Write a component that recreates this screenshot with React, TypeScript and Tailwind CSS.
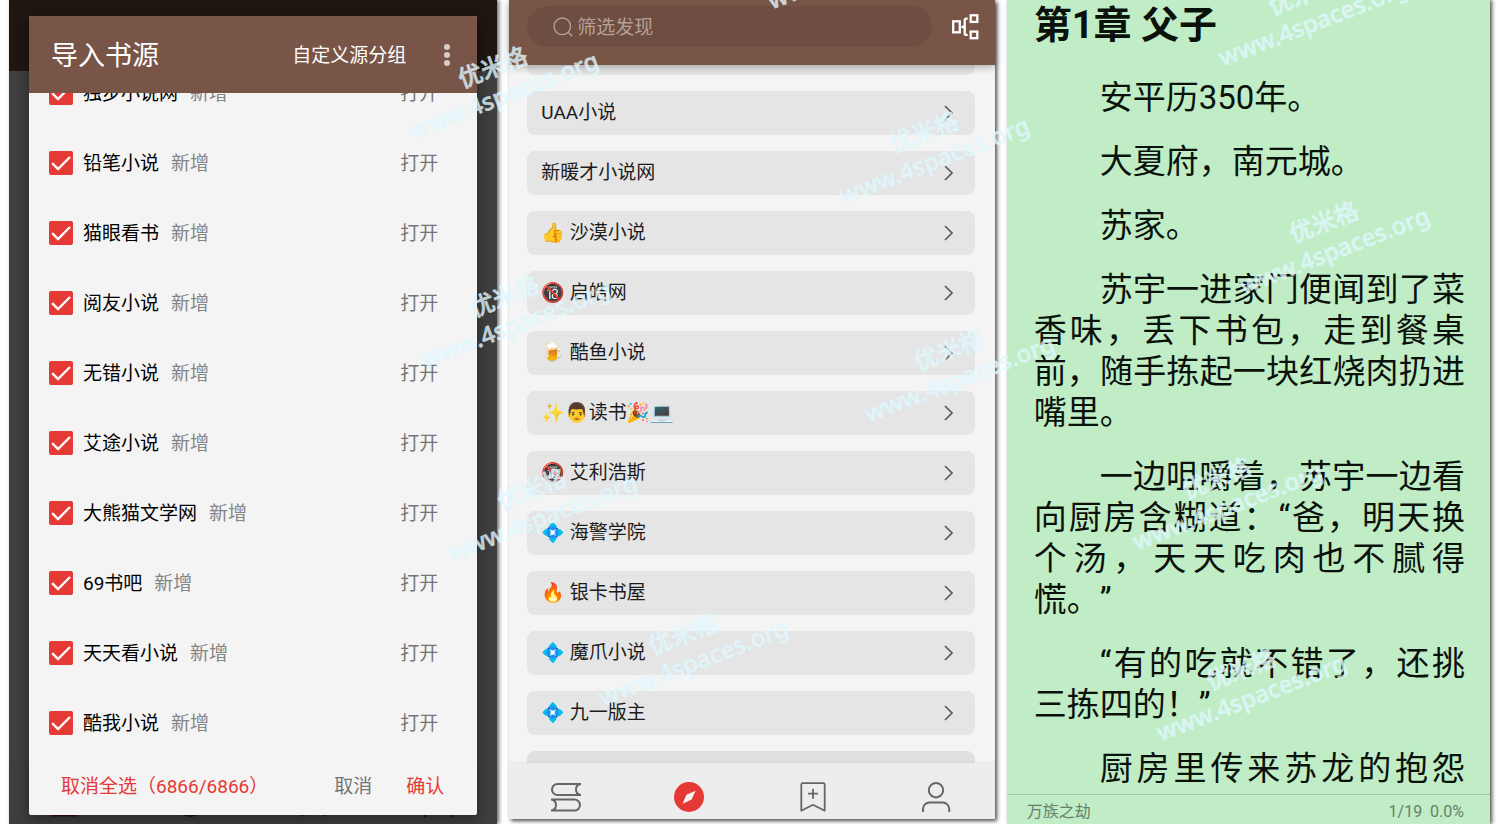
import React, { useState } from 'react';

const importSources = [
  '独步小说网',
  '铅笔小说',
  '猫眼看书',
  '阅友小说',
  '无错小说',
  '艾途小说',
  '大熊猫文学网',
  '69书吧',
  '天天看小说',
  '酷我小说',
];

const discoverSources = [
  'UAA小说',
  '新暖才小说网',
  '👍 沙漠小说',
  '🔞 启皓网',
  '🍺 酷鱼小说',
  '✨👨读书🎉💻',
  '🔞 艾利浩斯',
  '💠 海警学院',
  '🔥 银卡书屋',
  '💠 魔爪小说',
  '💠 九一版主',
];

const paragraphs = [
  '安平历350年。',
  '大夏府，南元城。',
  '苏家。',
  '苏宇一进家门便闻到了菜香味，丢下书包，走到餐桌前，随手拣起一块红烧肉扔进嘴里。',
  '一边咀嚼着，苏宇一边看向厨房含糊道：“爸，明天换个汤，天天吃肉也不腻得慌。”',
  '“有的吃就不错了，还挑三拣四的！”',
];

// Centre points of the repeated site mark
const marks = [
  [498, 81],
  [857, -49],
  [929, 146],
  [1308, 8],
  [1329, 236],
  [510, 310],
  [954, 364],
  [537, 503],
  [1222, 492],
  [688, 648],
  [1246, 683],
];

function BooksIcon() {
  return (
    <svg viewBox="0 0 30 30" className="size-[30px]" fill="none" stroke="currentColor" strokeWidth="2" strokeLinejoin="round">
      <path d="M30 2H6.5a5.5 5.5 0 0 0 0 11H30C26.5 12.5 25 10 25 7.5S26.5 2.5 30 2" />
      <path d="M0 17.6h23.5a5.5 5.5 0 0 1 0 11H0c3.5-.5 5-3 5-5.5s-1.500-5-5-5.500" />
    </svg>
  );
}

function CompassIcon() {
  return (
    <svg viewBox="0 0 30 30" className="size-[30px]">
      <circle cx="15" cy="15" r="15" fill="currentColor" />
      <path d="M21.600 8.700 17.600 17.500 8.600 21.700 12.400 12.800Z" fill="#f4f4f4" />
    </svg>
  );
}

function BookmarkIcon() {
  return (
    <svg viewBox="0 0 30 30" className="size-[30px]" fill="none" stroke="currentColor" strokeWidth="1.800" strokeLinejoin="round">
      <path d="M4.800 1.200h20.400a1.500 1.500 0 0 1 1.500 1.500v26L15 22.800 3.300 28.700v-26a1.500 1.500 0 0 1 1.500-1.500Z" />
      <path d="M15 6.700v10M10 11.700h10" />
    </svg>
  );
}

function PersonIcon() {
  return (
    <svg viewBox="0 0 30 30" className="size-[30px]" fill="none" stroke="currentColor" strokeWidth="2">
      <circle cx="15" cy="8.200" r="7.200" />
      <path d="M2 30v-3a6.600 6.600 0 0 1 6.600-6.600h13A6.600 6.600 0 0 1 28.200 27v3" />
    </svg>
  );
}

function BottomNav({ active }: { active: 'books' | 'discover' }) {
  return (
    <nav className="flex h-14 shrink-0 justify-between bg-[#ededed] pl-[42px] pr-11 pt-[19px] text-[#666] shadow-[0_-1px_2px_rgba(0,0,0,0.06)]">
      <button aria-label="书架" className={active === 'books' ? 'h-[30px] text-[#e53935]' : 'h-[30px]'}>
        <BooksIcon />
      </button>
      <button aria-label="发现" className={active === 'discover' ? 'h-[30px] text-[#e53935]' : 'h-[30px]'}>
        <CompassIcon />
      </button>
      <button aria-label="订阅" className="h-[30px]">
        <BookmarkIcon />
      </button>
      <button aria-label="我的" className="h-[30px]">
        <PersonIcon />
      </button>
    </nav>
  );
}

function SourceRow({ name }: { name: string }) {
  const [checked, setChecked] = useState(true);

  return (
    <li className="flex h-[70px] shrink-0 items-center pl-5 pr-[39px]">
      <label className="flex items-center">
        <span className="relative mr-[10px] size-6">
          <input
            type="checkbox"
            checked={checked}
            onChange={() => setChecked(!checked)}
            className="peer block size-6 appearance-none rounded-[2px] border-2 border-[#e53935] checked:bg-[#e53935]"
          />
          <svg viewBox="0 0 24 24" className="pointer-events-none absolute inset-0 hidden size-6 peer-checked:block" fill="none" stroke="#fff" strokeWidth="2.400">
            <path d="M3.200 12.200 9 18 21 6" />
          </svg>
        </span>
        <span className="pt-[2px] text-black">{name}</span>
        <span className="ml-3 pt-[2px] text-[#858585]">新增</span>
      </label>
      <button className="ml-auto pt-[2px] text-[#757575]">打开</button>
    </li>
  );
}

function ImportScreen() {
  return (
    <section className="relative flex min-w-0 flex-col bg-[#f4f4f4] shadow-[2px_0_4px_rgba(0,0,0,0.6)]">
      <div className="h-[71px] bg-[#795548]" />
      <div className="flex-1" />
      <BottomNav active="books" />
      <div className="absolute inset-0 bg-black/74" />

      <div role="dialog" aria-label="导入书源" className="absolute bottom-[9px] left-5 right-5 top-4 flex flex-col overflow-hidden rounded-[2px] bg-[#f4f4f4] text-[19px] shadow-[0_4px_14px_rgba(0,0,0,0.4)]">
        <header className="flex h-[77px] shrink-0 items-center bg-[#795548] pl-[22px] pr-[27px] text-white">
          <h1 className="pt-1 text-[27px]">导入书源</h1>
          <button className="ml-auto pt-1">自定义源分组</button>
          <button aria-label="更多" className="ml-[38px] flex flex-col gap-[2px]">
            <span className="size-[6px] rounded-full bg-[#d7ccc8]" />
            <span className="size-[6px] rounded-full bg-[#d7ccc8]" />
            <span className="size-[6px] rounded-full bg-[#d7ccc8]" />
          </button>
        </header>
        <ul className="flex min-h-0 flex-1 flex-col justify-end overflow-hidden">
          {importSources.map((name) => (
            <SourceRow key={name} name={name} />
          ))}
        </ul>
        <footer className="flex h-[57px] shrink-0 items-center pl-8 pr-[33px] pt-[2px] text-[#e53935]">
          <button>取消全选（6866/6866）</button>
          <button className="ml-auto text-[#757575]">取消</button>
          <button className="ml-[34px]">确认</button>
        </footer>
      </div>
    </section>
  );
}

function DiscoverScreen() {
  return (
    <section className="mb-[5px] flex min-w-0 flex-col bg-[#f4f4f4] text-[19px] shadow-[2px_2px_4px_rgba(0,0,0,0.7)]">
      <header className="z-10 flex h-[65px] shrink-0 items-start bg-[#795548] pl-[18px] pr-4 pt-[6px] shadow-[0_2px_8px_rgba(0,0,0,0.3)]">
        <label className="flex h-[41px] min-w-0 flex-1 items-center rounded-full bg-black/8 pl-[26px] text-[#b5a099]">
          <svg viewBox="0 0 20 20" className="mr-1 size-5 shrink-0" fill="none" stroke="currentColor" strokeWidth="1.300">
            <circle cx="9.300" cy="9.300" r="8.300" />
            <path d="m15.500 15.500 3.700 3.700" />
          </svg>
          <input aria-label="筛选发现" placeholder="筛选发现" className="min-w-0 flex-1 bg-transparent pt-1 outline-none placeholder:text-[#b5a099]" />
        </label>
        <button aria-label="分组" className="ml-5 mt-2">
          <svg viewBox="0 0 27 27" className="size-[27px]" fill="none" stroke="#fff" strokeWidth="2.300">
            <rect x="1.200" y="7.300" width="6.600" height="11" />
            <path d="M9.500 13h3.200M15.700 4.700h-1.300a1.700 1.700 0 0 0-1.700 1.700v12.800a1.700 1.700 0 0 0 1.700 1.700h1.300" />
            <rect x="18.700" y="1.300" width="6.600" height="6.600" />
            <rect x="18.700" y="17.600" width="6.600" height="6.600" />
          </svg>
        </button>
      </header>
      <div className="min-h-0 flex-1 overflow-hidden">
        <ul className="-mt-[34px] flex flex-col gap-4 pl-[18px] pr-5">
          <li className="h-11 rounded-lg bg-[#e5e5e5]" />
          {discoverSources.map((name) => (
            <li key={name}>
              <button className="flex h-11 w-full items-center justify-between rounded-lg bg-[#e5e5e5] pl-[14px] pr-[22px] text-left text-[#1c1c1c]">
                <span className="whitespace-pre pt-px">{name}</span>
                <svg viewBox="0 0 9 16" className="h-4 w-[9px]" fill="none" stroke="#5c5c5c" strokeWidth="1.700">
                  <path d="m1 1 7 7-7 7" />
                </svg>
              </button>
            </li>
          ))}
          <li className="h-11 rounded-lg bg-[#e0e0e0]" />
        </ul>
      </div>
      <BottomNav active="discover" />
    </section>
  );
}

function ReaderScreen() {
  return (
    <section className="flex min-w-0 flex-col bg-[#c0edc6] text-[#0b120c] shadow-[2px_0_4px_rgba(0,0,0,0.7)]">
      <article className="min-h-0 flex-1 overflow-hidden pl-[27px] pr-[25px] pt-px">
        <h2 className="text-[38px] font-bold leading-[48px]">第1章 父子</h2>
        <div className="mt-7 flex flex-col gap-[23px] text-justify indent-[2em] text-[33px] leading-[41px]">
          {paragraphs.map((text) => (
            <p key={text}>{text}</p>
          ))}
          <p className="[text-align-last:justify]">厨房里传来苏龙的抱怨</p>
        </div>
      </article>
      <footer className="flex h-[30px] shrink-0 items-center justify-between border-t border-[#a0c4a5] pl-5 pr-[26px] pt-1 text-[16px] text-[#66806a]">
        <span>万族之劫</span>
        <span className="whitespace-pre">1/19  0.0%</span>
      </footer>
    </section>
  );
}

export default function App() {
  return (
    <div className="relative grid h-screen grid-cols-[488fr_485fr_483fr] grid-rows-[minmax(0,1fr)] gap-3 overflow-hidden bg-white pl-[9px] pr-[10px] font-['Roboto','Noto_Sans_CJK_SC','Noto_Color_Emoji',sans-serif] [text-spacing-trim:space-all]" lang="zh-CN">
      <ImportScreen />
      <DiscoverScreen />
      <ReaderScreen />

      <div aria-hidden="true" className="pointer-events-none absolute inset-0 z-20 overflow-hidden">
        {marks.map(([x, y]) => (
          <div
            key={`${x}-${y}`}
            className="absolute -translate-x-1/2 -translate-y-1/2 -rotate-21 text-center font-['Noto_Sans','Noto_Sans_CJK_SC',sans-serif] text-[24px] font-medium leading-[30px] text-[#e0f8ff] opacity-80 [-webkit-text-stroke:0.6px_#e0f8ff]"
            style={{ left: x, top: y }}
          >
            <div>优米格</div>
            <div>www.4spaces.org</div>
          </div>
        ))}
      </div>
    </div>
  );
}
